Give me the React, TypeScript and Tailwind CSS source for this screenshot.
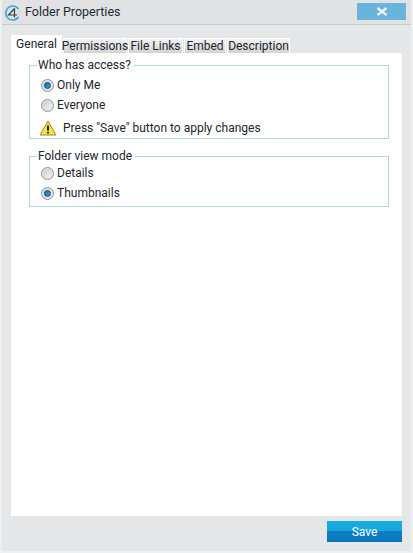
const font = "font-['Roboto',sans-serif]"

function Radio({ checked, label }: { checked?: boolean; label: string }) {
  return (
    <label className="flex h-5 items-center gap-[3px] text-[12px] text-[#1c2530]">
      <span className="flex h-[13px] w-[13px] items-center justify-center rounded-full border border-[#8f9397] bg-gradient-to-br from-[#c6c8ca] to-[#f8f8f8] shadow-[inset_0_0_0_1px_#e4e4e4]">
        {checked && (
          <span className="h-[7px] w-[7px] rounded-full border border-[#0d4a78] bg-gradient-to-br from-[#0f6aa8] to-[#35a5e0]" />
        )}
      </span>
      {label}
    </label>
  )
}

function Tab({ label, width }: { label: string; width: string }) {
  return (
    <div
      className={`flex h-[15px] items-center justify-center border-t border-x border-white bg-gradient-to-b from-[#f2f2f2] to-[#d3d3d3] text-[12px] text-[#1c2530] ${width}`}
    >
      {label}
    </div>
  )
}

export default function App() {
  return (
    <div className={`flex h-[553px] w-[413px] flex-col border-x-2 border-b-2 border-[#eeeff0] bg-[#e5e6e8] ${font}`}>
      {/* Title bar */}
      <div className="flex h-[25px] items-start justify-between border-b border-[#c8cacc] bg-[#e0e2e4] pl-[3px] pr-[5px]">
        <div className="flex h-full items-center gap-[4px] pt-[1px] text-[12.5px] text-[#1f2a35]">
          <svg width="16" height="16" viewBox="0 0 16 16" fill="none">
            <path d="M13.5 4A7 7 0 1 0 13.5 12" stroke="#35a8d8" strokeWidth="1.6" />
            <path d="M13.5 4A7 7 0 0 1 13.5 12" stroke="#cfd8de" strokeWidth="1.2" />
            <path d="M9.5 3.5L3.5 10H12M9.5 3.5V12.5" stroke="#3a4046" strokeWidth="1.2" />
          </svg>
          Folder Properties
        </div>
        <button className="mt-[3px] flex h-[17px] w-[49px] items-center justify-center bg-[#68b4da]">
          <svg width="12" height="9" viewBox="0 0 12 9">
            <path d="M1.5 1L10.5 8M10.5 1L1.5 8" stroke="#eef4f8" strokeWidth="2.4" />
          </svg>
        </button>
      </div>

      {/* Tabs */}
      <div className="mt-[10px] flex h-[18px] items-end pl-[9px]">
        <div className="flex h-[18px] w-[51px] items-center justify-center bg-white text-[12px] text-[#1c2530]">
          General
        </div>
        <div className="flex items-end gap-[1px] pl-[1px]">
          <Tab label="Permissions" width="w-[64px]" />
          <Tab label="File Links" width="w-[55px]" />
          <Tab label="Embed" width="w-[42px]" />
          <Tab label="Description" width="w-[63px]" />
        </div>
      </div>

      {/* Panel */}
      <div className="ml-[9px] mr-[9px] flex flex-1 flex-col bg-white pl-[18px] pr-[13px] pt-[6px]">
        <fieldset className="h-[80px] border border-[#b0d8dc] pl-[7px]">
          <legend className="px-[1px] pr-[3px] text-[12px] leading-[13px] text-[#1c2530]">Who has access?</legend>
          <div className="flex flex-col pl-[4px] pt-[3px]">
            <Radio checked label="Only Me" />
            <Radio label="Everyone" />
          </div>
          <div className="mt-[4px] flex items-center gap-[6px] pl-[2px] text-[12px] text-[#1c2530]">
            <svg width="18" height="16" viewBox="0 0 18 16">
              <path d="M9 1L17 15H1Z" fill="#f8e04a" stroke="#9a8a20" strokeWidth="1" strokeLinejoin="round" />
              <path d="M9 5.5V10.5" stroke="#222" strokeWidth="2" />
              <path d="M9 11.8V13.6" stroke="#222" strokeWidth="2" />
            </svg>
            Press "Save" button to apply changes
          </div>
        </fieldset>
        <fieldset className="mt-[11px] h-[57px] border border-[#b0d8dc] pl-[7px]">
          <legend className="px-[1px] pr-[3px] text-[12px] leading-[13px] text-[#1c2530]">Folder view mode</legend>
          <div className="flex flex-col pl-[4px]">
            <Radio label="Details" />
            <Radio checked label="Thumbnails" />
          </div>
        </fieldset>
      </div>

      {/* Footer */}
      <div className="flex h-[35px] items-start justify-end pr-[9px] pt-[5px]">
        <button className="h-[21px] w-[75px] bg-[linear-gradient(to_bottom,#14b0e2_0%,#1aa4dc_45%,#0d80c8_50%,#0b74bc_100%)] text-[12px] text-white">
          Save
        </button>
      </div>
    </div>
  )
}
